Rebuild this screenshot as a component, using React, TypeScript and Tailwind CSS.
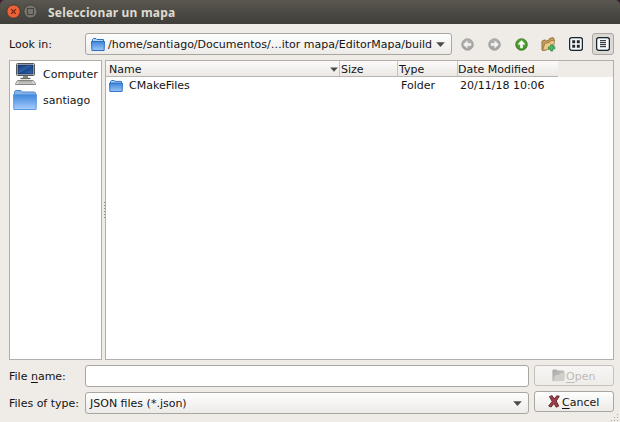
import type { ReactNode } from "react";

function Folder({ w, h }: { w: number; h: number }) {
  return (
    <svg width={w} height={h} viewBox="0 0 14 13" preserveAspectRatio="none" className="block shrink-0">
      <defs>
        <linearGradient id="folderFront" x1="0" y1="0" x2="0" y2="1">
          <stop offset="0" stopColor="#3f86da" />
          <stop offset="1" stopColor="#9cc6f8" />
        </linearGradient>
      </defs>
      <path d="M1.5 3.5v-2l1-1H5l1 1h6.5v2z" fill="#b4d3f5" stroke="#2b6fc2" strokeWidth="1" />
      <path d="M0.5 3.5h13l-.4 9H.9z" fill="url(#folderFront)" stroke="#2a6fc6" strokeWidth="1" />
    </svg>
  );
}

function BigFolder() {
  return (
    <svg width="24" height="20" viewBox="0 0 24 20" className="block shrink-0">
      <defs>
        <linearGradient id="bigFront" x1="0" y1="0" x2="0" y2="1">
          <stop offset="0" stopColor="#4086da" />
          <stop offset="0.45" stopColor="#6ba5ec" />
          <stop offset="1" stopColor="#a9cefb" />
        </linearGradient>
      </defs>
      <path d="M1.5 5V1.5L2.5.5H8l1.3 1.5h12.2l1 1V5h-21z" fill="#84b2e8" stroke="#4c87cc" />
      <path d="M.5 4.5h23l-.4 15H.9z" fill="url(#bigFront)" stroke="#5b98e2" />
    </svg>
  );
}

function Computer() {
  return (
    <svg width="22" height="22" viewBox="0 0 22 22" className="block shrink-0">
      <defs>
        <linearGradient id="screen" x1="0" y1="0" x2="1" y2="1">
          <stop offset="0" stopColor="#143a78" />
          <stop offset=".48" stopColor="#2f62a8" />
          <stop offset=".52" stopColor="#1c468a" />
          <stop offset="1" stopColor="#326bb5" />
        </linearGradient>
      </defs>
      <rect x="1.5" y=".5" width="18" height="12" rx="1" fill="#e3e3df" stroke="#555753" />
      <rect x="3" y="2" width="15" height="9" fill="url(#screen)" stroke="#122850" strokeWidth=".8" />
      <path d="M8 13h5v2H8z" fill="#888a85" />
      <path d="M5.5 15.5h10" stroke="#666863" strokeWidth="1.4" />
      <path d="M2.6 17.5h15.6l2.3 3.2v.8H.6v-.8z" fill="#e4e4e1" stroke="#777974" strokeWidth=".9" />
      <path d="M3.5 18.7h13.5M3 20h15" stroke="#888a85" strokeWidth=".7" />
    </svg>
  );
}

function ArrowButton({ dir }: { dir: "left" | "right" | "up" }) {
  const up = dir === "up";
  const angle = up ? 90 : dir === "right" ? 180 : 0;
  return (
    <svg width="13" height="13" viewBox="0 0 13 13" className="block">
      <defs>
        <radialGradient id={`ball-${dir}`} cx=".5" cy=".4" r=".6">
          <stop offset="0" stopColor={up ? "#6cb848" : "#b9b9b7"} />
          <stop offset="1" stopColor={up ? "#3a8a1e" : "#a09f9d"} />
        </radialGradient>
      </defs>
      <circle cx="6.5" cy="6.5" r="5.8" fill={`url(#ball-${dir})`} stroke={up ? "#3c7a27" : "#a09f9c"} strokeWidth=".8" />
      <g transform={`rotate(${angle} 6.5 6.5)`}>
        <path d="M2.2 6.5 6.4 2.5V5.2H10.2V7.8H6.4v2.7z" fill={up ? "#fff" : "#f4f3f1"} />
      </g>
    </svg>
  );
}

function NewFolder() {
  return (
    <svg width="15" height="15" viewBox="0 0 15 15" className="block">
      <path d="M1 13V4.4l.8-.9 2.6-.5 1 .9 2.4-.8.7-1.6 3.4-.9 1.1.9v2L4 13.5z" fill="#c99d57" stroke="#8a6a3a" strokeWidth=".9" />
      <path d="M1.6 13.6 3.7 6.6l5-1.4 1.1-1.4 3.7-.7-1 8.2z" fill="#edc988" stroke="#94713e" strokeWidth=".8" />
      <path d="M9.7 7.8h2v2.1h2.1v2h-2.1V14h-2v-2.1H7.6v-2h2.1z" fill="#4cc566" stroke="#25873f" strokeWidth=".8" />
    </svg>
  );
}

function ViewIcon({ list }: { list?: boolean }) {
  return (
    <svg width="14" height="14" viewBox="0 0 14 14" className="block">
      <rect x=".7" y=".7" width="12.6" height="12.6" rx="2" fill="#fff" stroke="#1c2630" strokeWidth="1.4" />
      <rect x="1.8" y="1.8" width="10.4" height="10.4" rx="1" fill="none" stroke="#d5e5f4" strokeWidth=".7" />
      {list ? (
        <path d="M4 3.5h6M4 5.5h6M4 7.5h6M4 9.5h6" stroke="#3d4043" strokeWidth="1.25" />
      ) : (
        <path d="M3.2 3.2h3v3h-3zM7.8 3.2h3v3h-3zM3.2 7.8h3v3h-3zM7.8 7.8h3v3h-3z" fill="#25292e" />
      )}
    </svg>
  );
}

function Caret({ small }: { small?: boolean }) {
  return (
    <svg width={small ? 8 : 9} height="5" viewBox="0 0 9 5" className="block shrink-0">
      <path d="M.2.2h8.6L4.5 5z" fill="#4b4b4b" />
    </svg>
  );
}

function Combo({ children, className }: { children: ReactNode; className: string }) {
  return (
    <div className={`flex h-[22px] shrink-0 items-center rounded-[3px] border border-[#aaa6a1] bg-linear-to-b from-[#fefefe] to-[#edebe8] pr-[6px] ${className}`}>
      {children}
      <span className="ml-auto"><Caret /></span>
    </div>
  );
}

function HeaderCell({ children, className }: { children: ReactNode; className: string }) {
  return (
    <div className={`flex h-4 shrink-0 items-center border-b border-[#b8b4b0] bg-linear-to-b from-[#fcfbfa] to-[#ebe8e4] pt-[2px] ${className}`}>
      {children}
    </div>
  );
}

export default function App() {
  return (
    <div className="flex h-[422px] w-[620px] flex-col overflow-hidden bg-[#efebe7] font-['DejaVu_Sans',sans-serif] text-[11px] leading-[13px] whitespace-nowrap text-[#141414]">
      <div className="shrink-0 bg-[#3a1a33]">
        <header className="flex h-6 items-center rounded-t-[5px] bg-linear-to-b from-[#59574f] to-[#3f3e39] pl-[6px]">
          <svg width="32" height="16" viewBox="0 0 32 16" className="block">
            <circle cx="7.5" cy="7.5" r="6.6" fill="#ee6138" stroke="#45352d" strokeWidth=".8" />
            <path d="m5.2 5.2 4.6 4.6m0-4.6L5.2 9.8" stroke="#5b2412" strokeWidth="1.1" />
            <circle cx="24.5" cy="7.5" r="6.6" fill="#78766e" stroke="#3a3934" strokeWidth=".8" />
            <rect x="21.5" y="4.5" width="6" height="6" fill="none" stroke="#47463f" strokeWidth="1.1" />
          </svg>
          <h1 className="mt-[2px] ml-[10px] font-['Noto_Sans',sans-serif] text-[12px] leading-4 font-bold tracking-[0.18px] text-[#dfdbd2]">Seleccionar un mapa</h1>
        </header>
      </div>

      <div className="mt-[7px] flex h-[26px] shrink-0 items-center pl-[9px]">
        <span className="w-[76px]">Look in:</span>
        <Combo className="w-[367px] pl-[5px]">
          <Folder w={14} h={13} />
          <span className="ml-[3px]">/home/santiago/Documentos/…itor mapa/EditorMapa/build</span>
        </Combo>
        <div className="ml-[9px] flex items-center">
          <ArrowButton dir="left" />
          <span className="ml-[14px]"><ArrowButton dir="right" /></span>
          <span className="ml-[14px]"><ArrowButton dir="up" /></span>
          <span className="ml-[13px]"><NewFolder /></span>
          <span className="ml-[13px]"><ViewIcon /></span>
        </div>
        <div className="ml-[9px] flex h-[22px] w-[22px] items-center justify-center rounded-[3px] border border-[#aaa6a1] bg-[#dcd8d4]">
          <ViewIcon list />
        </div>
      </div>

      <main className="mt-[3px] flex h-[300px] shrink-0 pl-[9px]">
        <aside className="w-[93px] shrink-0 border border-[#b3aeaa] bg-white">
          <div className="flex h-[26px] items-center pl-[5px]">
            <Computer />
            <span className="ml-[6px]">Computer</span>
          </div>
          <div className="flex h-[26px] items-center pl-[3px]">
            <BigFolder />
            <span className="ml-[6px]">santiago</span>
          </div>
        </aside>
        <div className="flex w-[3px] shrink-0 flex-col items-end justify-center gap-[2px]">
          {[0, 1, 2, 3, 4, 5].map((i) => <i key={i} className="block size-px bg-[#8e8a86]" />)}
        </div>
        <section className="w-[509px] shrink-0 border border-[#b3aeaa] bg-white">
          <div className="flex h-4 bg-[#efebe7]">
            <HeaderCell className="w-[234px] border-r border-r-[#c6c2be] pr-px pl-[3px]">
              Name<span className="ml-auto"><Caret small /></span>
            </HeaderCell>
            <HeaderCell className="w-[58px] border-r border-r-[#c6c2be] pl-px">Size</HeaderCell>
            <HeaderCell className="w-[60px] border-r border-r-[#c6c2be] pl-px">Type</HeaderCell>
            <HeaderCell className="w-[100px]">Date Modified</HeaderCell>
          </div>
          <div className="flex h-[17px] items-center pl-[3px]">
            <Folder w={14} h={12} />
            <span className="ml-[6px] w-[272px]">CMakeFiles</span>
            <span className="w-[59px]">Folder</span>
            <span>20/11/18 10:06</span>
          </div>
        </section>
      </main>

      <footer className="mt-[5px] flex pl-[9px]">
        <div className="flex w-[76px] flex-col gap-[5px]">
          <label className="flex h-[22px] items-center"><span>File <u className="underline-offset-2">n</u>ame:</span></label>
          <label className="flex h-[22px] items-center">Files of type:</label>
        </div>
        <div className="flex flex-col gap-[5px]">
          <div className="h-[22px] w-[444px] rounded-[3px] border border-[#aaa6a1] bg-white" />
          <Combo className="w-[444px] pl-[4px]">JSON files (*.json)</Combo>
        </div>
        <div className="ml-[5px] flex flex-col gap-[5px]">
          <button className="flex h-[21px] w-[80px] items-center rounded-[3px] border border-[#c5c1bd] bg-linear-to-b from-[#f7f6f4] to-[#efedea] pl-[17px] text-[#bdbab7]">
            <svg width="13" height="13" viewBox="0 0 13 13" className="block">
              <defs>
                <linearGradient id="openFolder" x1="0" y1="0" x2="1" y2="1">
                  <stop offset="0" stopColor="#a9a8a5" />
                  <stop offset="1" stopColor="#cfceca" />
                </linearGradient>
              </defs>
              <path d="M.4 12V1.2L1.2.4h3.4l1 1.2h6.2l.4 1.6.6.6-.6 7.6-1 .6z" fill="url(#openFolder)" />
              <path d="m1.4 12.3 1.4-6 4.4-.6 1.2-1.5 4.4-.4-.7 7.5-.8.8z" fill="#d0cfcb" />
            </svg>
            <span className="mt-px ml-px"><u className="underline-offset-2">O</u>pen</span>
          </button>
          <button className="flex h-[21px] w-[80px] items-center rounded-[3px] border border-[#aaa6a1] bg-linear-to-b from-[#fefefe] to-[#edebe8] pl-[13px]">
            <svg width="13" height="13" viewBox="0 0 13 13" className="block">
              <path d="M1.4 1.5 4.2.7 6.2 4 8.8.8l2.5.4L8.2 6l2.6 5-2.6 1.2L6 8.4 3.1 12l-2.4-.9L4.2 6.4z" fill="#a33c47" stroke="#5e3037" strokeWidth="1" strokeLinejoin="round" />
            </svg>
            <span className="mt-px ml-px"><u className="underline-offset-2">C</u>ancel</span>
          </button>
        </div>
      </footer>
      <svg width="8" height="8" viewBox="0 0 8 8" className="mr-px ml-auto block shrink-0">
        <path d="M6 0h1v1H6zM3 3h1v1H3zM6 3h1v1H6zM0 6h1v1H0zM3 6h1v1H3zM6 6h1v1H6z" fill="#aaa5a0" />
      </svg>
    </div>
  );
}
